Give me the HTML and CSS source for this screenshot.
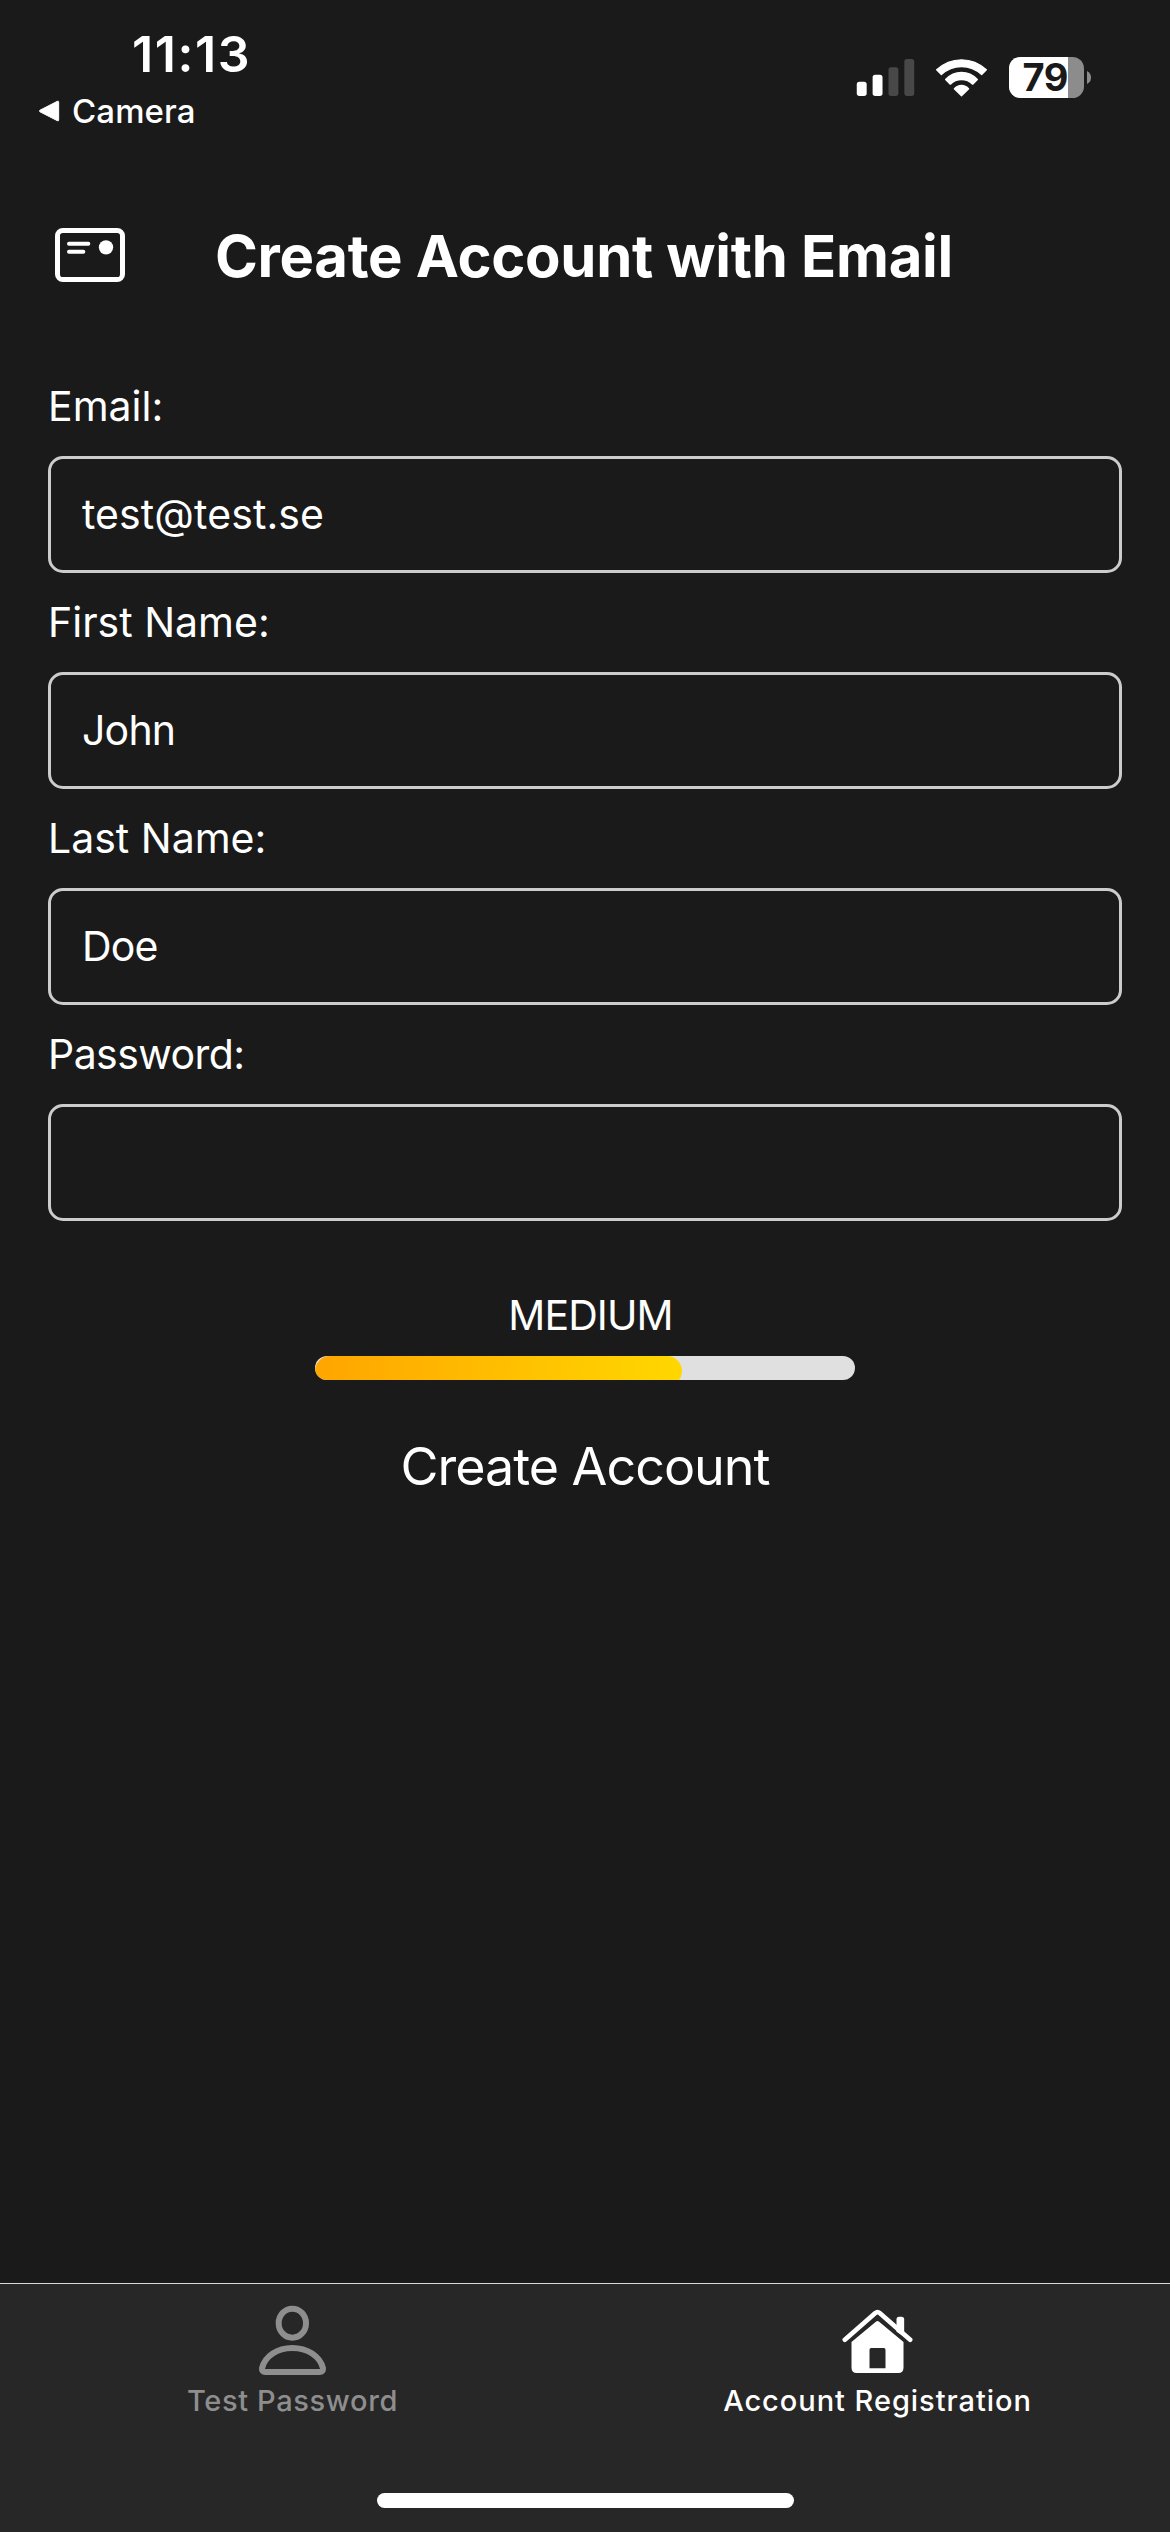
FILE: index.html
```
<!DOCTYPE html>
<html lang="en">
<head>
<meta charset="utf-8">
<title>Create Account</title>
<link rel="stylesheet" href="styles.css">
</head>
<body>
<div class="screen">
  <header class="status">
    <div class="status-left">
      <div class="time">11:13</div>
      <div class="back">
        <svg class="back-arrow" viewBox="0 0 66 66"><path d="M6 30.500 58 4Q62 2 62 7V59Q62 64 58 62L6 35.500Q2 33 6 30.500Z" fill="#fff" stroke="#fff" stroke-width="3"/></svg>
        <span class="back-label">Camera</span>
      </div>
    </div>
    <div class="status-right">
      <svg class="signal" viewBox="107 86 176 112">
        <rect x="108" y="155" width="30" height="43" rx="8" fill="#fff"/>
        <rect x="156" y="134" width="30" height="64" rx="8" fill="#fff"/>
        <rect x="204" y="111" width="30" height="87" rx="8" fill="#484848"/>
        <rect x="252" y="86" width="30" height="112" rx="8" fill="#484848"/>
      </svg>
      <svg class="wifi" viewBox="348 86 153 113" fill="#fff" stroke="#fff" stroke-width="4" stroke-linejoin="round">
        <path d="M350 118Q382 88 424.500 88T499 118L485 132Q459 108 424.500 108T364 132Z"/>
        <path d="M377 147Q397 126 424.500 126T472 147L458 161Q444 147 424.500 147T391 161Z"/>
        <path d="M403 175Q412 165 424.500 165T446 175L424.500 196Z"/>
      </svg>
      <svg class="battery" viewBox="0 0 83 41">
        <clipPath id="cell"><rect width="75" height="41" rx="11.500"/></clipPath>
        <g clip-path="url(#cell)"><rect width="75" height="41" fill="#8c8c8c"/><rect width="59" height="41" fill="#fff"/></g>
        <path d="M78 14Q82 16 82 20.500T78 27Z" fill="#8c8c8c"/>
        <text class="battery-level" x="13.500" y="34.300" textLength="46">79</text>
      </svg>
    </div>
  </header>

  <div class="title-row">
    <svg class="card-icon" viewBox="75 84 210 162" fill="none" stroke="#fff" stroke-linecap="round">
      <rect x="82.500" y="91.500" width="195" height="147" rx="16" stroke-width="15"/>
      <path d="M117 131H175M117 155H160" stroke-width="12"/>
      <circle cx="228" cy="142" r="21.500" fill="#fff" stroke="none"/>
    </svg>
    <h1 class="title">Create Account with Email</h1>
  </div>

  <form class="form">
    <label class="label label-email" for="email">Email:</label>
    <input class="input input-email" id="email" type="text" value="test@test.se">
    <label class="label label-first" for="first">First Name:</label>
    <input class="input input-name" id="first" type="text" value="John">
    <label class="label label-last" for="last">Last Name:</label>
    <input class="input input-name" id="last" type="text" value="Doe">
    <label class="label label-password" for="password">Password:</label>
    <input class="input" id="password" type="password">
    <div class="strength">MEDIUM</div>
    <div class="meter"><div class="meter-fill"></div></div>
    <button class="submit" type="button">Create Account</button>
  </form>

  <nav class="tabs">
    <div class="tab tab-muted">
      <svg class="tab-icon" viewBox="290 105 216 213" fill="none" stroke="#8e8e8e" stroke-width="18" stroke-linejoin="round">
        <ellipse cx="399" cy="159.500" rx="41" ry="43.500"/>
        <path d="M308 295C317 258 354 234 399 234S482 258 491 295Q492 306 481 306H318Q307 306 308 295Z"/>
      </svg>
      <span class="tab-label tab-label-test">Test Password</span>
    </div>
    <div class="tab">
      <svg class="tab-icon" viewBox="424.500 105 216 213" fill="#fff">
        <path d="M591 185V148Q591 140 599 140H606Q614 140 614 148V200Z"/>
        <path d="M436 209.500 527.500 129Q534 123.500 540.500 129L632 209.500" fill="none" stroke="#fff" stroke-width="14" stroke-linecap="round"/>
        <path fill-rule="evenodd" d="M456 216 530 154.500Q534 151 538 154.500L612 216V293Q612 309 596 309H472Q456 309 456 293ZM515 234Q510 234 510 239V295H558V239Q558 234 553 234Z"/>
      </svg>
      <span class="tab-label tab-label-account">Account Registration</span>
    </div>
    <div class="home-indicator"></div>
  </nav>
</div>
</body>
</html>
```
FILE: styles.css
```
* { box-sizing: border-box; }
body { margin: 0; background: #1a1a1a; }
.screen {
  width: 1170px; height: 2532px;
  display: flex; flex-direction: column;
  background: #1a1a1a; color: #fff;
  font-family: Inter, "Liberation Sans", sans-serif;
}
svg { display: block; flex: none; }

.status { display: flex; justify-content: space-between; height: 221px; padding: 24px 78px 0 38px; }
.status-left { display: flex; flex-direction: column; }
.time { height: 67px; padding-left: 94px; font-size: 50px; font-weight: 600; line-height: 60px; letter-spacing: 1.600px; white-space: nowrap; }
.back { display: flex; align-items: center; gap: 12px; height: 40px; }
.back-arrow { width: 22px; height: 22px; }
.back-label { font-size: 33px; font-weight: 500; line-height: 40px; letter-spacing: 0.100px; }
.status-right { display: flex; align-items: flex-start; padding-top: 33px; }
.signal { width: 59px; height: 37px; margin: 2px 21px 0 0; }
.wifi { width: 51px; height: 38px; margin: 1.500px 22px 0 0; }
.battery { width: 83px; height: 41px; overflow: visible; }
.battery-level { font-size: 38px; font-weight: 700; fill: #1a1a1a; }

.title-row { display: flex; align-items: flex-start; height: 160px; padding-left: 55px; }
.card-icon { width: 70px; height: 54px; margin: 7px 90px 0 0; }
.title { margin: 0; font-size: 58px; font-weight: 700; line-height: 70px; letter-spacing: -0.300px; white-space: nowrap; }

.form { display: flex; flex-direction: column; flex: 1; padding: 0 48px; }
.label { margin: 24px 0 25px; font-size: 41px; line-height: 50px; }
.label-email { margin-top: 0; }
.label-password { letter-spacing: -0.550px; }
.input {
  width: 100%; height: 117px; padding: 0 31px 2px;
  border: 3px solid #ccc; border-radius: 15px; outline: none;
  background: transparent; color: #fff;
  font: 400 41px Inter, "Liberation Sans", sans-serif;
}
.input-email { letter-spacing: 0.100px; }
.input-name { letter-spacing: -0.800px; }
.strength { align-self: center; margin: 69px 0 16px 11px; font-size: 41px; line-height: 50px; letter-spacing: -0.900px; }
.meter { align-self: center; width: 540px; height: 24px; border-radius: 12px; background: #e0e0e0; overflow: hidden; }
.meter-fill { width: 367px; height: 30px; border-radius: 15px; background: linear-gradient(94deg, #ffa500, #ffd700); }
.submit {
  align-self: center; margin-top: 56px; padding: 0; border: 0; background: none; color: #fff;
  font: 400 52px/62px Inter, "Liberation Sans", sans-serif;
  letter-spacing: -1px;
}

.tabs {
  display: grid; grid-template-columns: 1fr 1fr; grid-template-rows: 209px 15px; justify-items: center;
  height: 249px; border-top: 1px solid #d8d8d8; background: #272727;
}
.tab { display: flex; flex-direction: column; align-items: center; padding-top: 21px; }
.tab-icon { width: 72px; height: 71px; }
.tab-label { margin-top: 7px; font-size: 29px; font-weight: 500; line-height: 36px; letter-spacing: 0.650px; }
.tab-label-account { letter-spacing: 0.950px; }
.tab-muted { color: #8e8e8e; }
.home-indicator { grid-column: 1 / -1; width: 417px; height: 15px; border-radius: 8px; background: #fff; }
```
